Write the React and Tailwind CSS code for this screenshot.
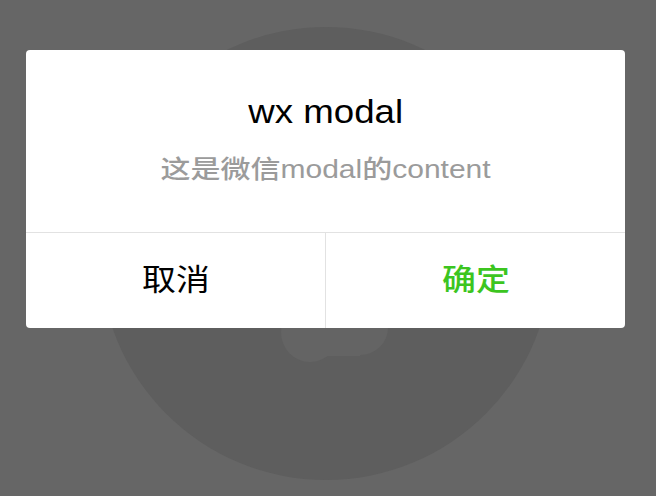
export default function App() {
  return (
    <div className="relative w-[656px] h-[496px] overflow-hidden bg-[#666666] flex items-start" style={{ fontFamily: '"Liberation Sans", "Noto Sans CJK SC", sans-serif' }}>
      <div className="absolute left-[100px] top-[27px] w-[452px] h-[453px] rounded-full bg-[#5e5e5e]" />
      <svg className="absolute left-[280px] top-[300px]" width="112" height="66" viewBox="0 0 112 66">
        <ellipse cx="30" cy="32" rx="29" ry="30" fill="#646464" />
        <ellipse cx="80" cy="28" rx="28" ry="27" fill="#646464" />
        <rect x="30" y="20" width="50" height="36" fill="#646464" />
      </svg>
      <div className="relative ml-[26px] mt-[50px] w-[599px] h-[278px] bg-white rounded-[4px] flex flex-col">
        <div className="h-[182px] flex flex-col items-center pt-[43px]">
          <div className="text-[33px] leading-[38px] text-black scale-x-111">wx modal</div>
          <div className="mt-[22px] text-[25px] leading-[32px] font-medium text-[#9b9b9b] scale-x-120">这是微信modal的content</div>
        </div>
        <div className="h-px bg-[#e2e2e2]" />
        <div className="flex-1 flex">
          <div className="flex-1 flex items-center justify-center pb-[2px]">
            <span className="text-[30px] text-black scale-x-113">取消</span>
          </div>
          <div className="w-px bg-[#e2e2e2]" />
          <div className="flex-1 flex items-center justify-center pb-[2px]">
            <span className="text-[30px] font-medium text-[#3cc51f] scale-x-113">确定</span>
          </div>
        </div>
      </div>
    </div>
  );
}
